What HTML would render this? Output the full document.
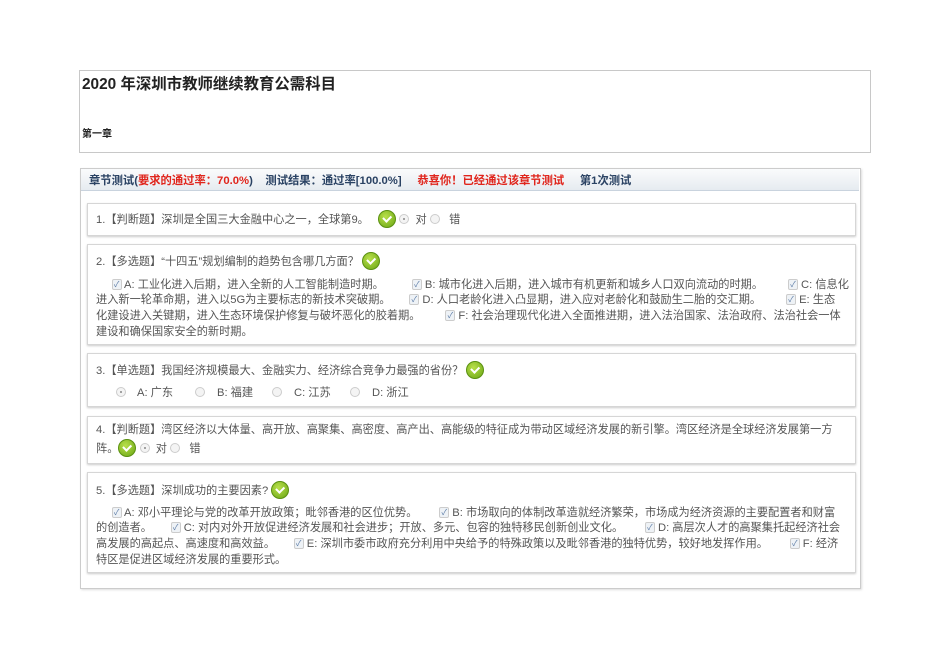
<!DOCTYPE html>
<html><head><meta charset="utf-8"><style>
body{margin:0;width:950px;height:672px;background:#fff;position:relative;font-family:"Liberation Sans","Noto Sans CJK SC",sans-serif;overflow:hidden}
.a{position:absolute;white-space:nowrap}
.t{font-size:11.2px;color:#555;line-height:14px}
.box{position:absolute;border:1px solid #d6d6d6;box-shadow:0 1px 2px #ccc;background:#fff}
.ok{display:inline-block;width:18px;height:18px;border-radius:50%;background:radial-gradient(circle at 40% 35%,#b8e04a,#6aa514);vertical-align:middle;position:relative;top:-1px;border:1px solid #5a9010;box-sizing:border-box}
.ok:after{content:"";position:absolute;left:4px;top:3.5px;width:6px;height:3.5px;border-left:2px solid #fff;border-bottom:2px solid #fff;transform:rotate(-45deg)}
.r{display:inline-block;width:10px;height:10px;border-radius:50%;border:1px solid #ccc;background:#f4f4f4;vertical-align:middle;box-sizing:border-box;position:relative;top:-1px}
.r.s:after{content:"";position:absolute;left:3px;top:3px;width:2px;height:2px;background:#888;border-radius:50%}
.c{display:inline-block;width:10px;height:11px;border:1px solid #ccc;border-radius:2px;background:#eef2f6;vertical-align:middle;box-sizing:border-box;position:relative;top:-1px;font-size:8px;line-height:9px;text-align:center;color:#5b7ba6}
</style></head><body>
<div style="position:absolute;left:79px;top:70px;width:790px;height:81px;border:1px solid #c8c8c8"></div>
<div class="a" style="left:82px;top:72px;font-size:15.4px;font-weight:bold;color:#222">2020 年深圳市教师继续教育公需科目</div>
<div class="a" style="left:82px;top:125px;font-size:10px;font-weight:bold;color:#222">第一章</div>

<div style="position:absolute;left:80px;top:168px;width:779px;height:419px;border:1px solid #ccc;box-shadow:1px 1px 2px #ddd"></div>
<div style="position:absolute;left:81px;top:169px;width:778px;height:21px;background:linear-gradient(#fafbfc,#e6ebf0);border-bottom:1px solid #c9d3de"></div>
<div class="a" style="left:89px;top:172px;font-size:11.3px;font-weight:bold;color:#2a4263">章节测试(<span style="color:#e0251c">要求的通过率：70.0%</span>)&nbsp;&nbsp;&nbsp;&nbsp;测试结果：通过率[100.0%]&nbsp;&nbsp;&nbsp;&nbsp;&nbsp;<span style="color:#e0251c">恭喜你！已经通过该章节测试</span>&nbsp;&nbsp;&nbsp;&nbsp;&nbsp;第1次测试</div>

<div class="box" style="left:87px;top:203px;width:767px;height:31px"></div>
<div class="a t" style="left:96px;top:211px">1.【判断题】深圳是全国三大金融中心之一，全球第9。&nbsp;&nbsp;&nbsp;<span class="ok"></span> <span class="r s"></span> &nbsp;对 <span class="r"></span> &nbsp; 错</div>

<div class="box" style="left:87px;top:244px;width:767px;height:99px"></div>
<div class="a t" style="left:96px;top:253px">2.【多选题】“十四五”规划编制的趋势包含哪几方面？ <span class="ok"></span></div>
<div class="a t" style="left:96px;top:278px">&nbsp;&nbsp;&nbsp;&nbsp;&nbsp;<span class="c">✓</span> A: 工业化进入后期，进入全新的人工智能制造时期。&nbsp;&nbsp;&nbsp;&nbsp;&nbsp;&nbsp;&nbsp;&nbsp;&nbsp;<span class="c">✓</span> B: 城市化进入后期，进入城市有机更新和城乡人口双向流动的时期。&nbsp;&nbsp;&nbsp;&nbsp;&nbsp;&nbsp;&nbsp;&nbsp;<span class="c">✓</span> C: 信息化</div>
<div class="a t" style="left:96px;top:293px">进入新一轮革命期，进入以5G为主要标志的新技术突破期。&nbsp;&nbsp;&nbsp;&nbsp;&nbsp;&nbsp;<span class="c">✓</span> D: 人口老龄化进入凸显期，进入应对老龄化和鼓励生二胎的交汇期。&nbsp;&nbsp;&nbsp;&nbsp;&nbsp;&nbsp;&nbsp;&nbsp;<span class="c">✓</span> E: 生态</div>
<div class="a t" style="left:96px;top:309px">化建设进入关键期，进入生态环境保护修复与破坏恶化的胶着期。&nbsp;&nbsp;&nbsp;&nbsp;&nbsp;&nbsp;&nbsp;&nbsp;<span class="c">✓</span> F: 社会治理现代化进入全面推进期，进入法治国家、法治政府、法治社会一体</div>
<div class="a t" style="left:96px;top:325px">建设和确保国家安全的新时期。</div>

<div class="box" style="left:87px;top:353px;width:767px;height:52px"></div>
<div class="a t" style="left:96px;top:362px">3.【单选题】我国经济规模最大、金融实力、经济综合竞争力最强的省份？ <span class="ok"></span></div>
<div class="a t" style="left:116px;top:386px"><span class="r s"></span></div>
<div class="a t" style="left:137px;top:386px">A: 广东</div>
<div class="a t" style="left:195px;top:386px"><span class="r"></span></div>
<div class="a t" style="left:217px;top:386px">B: 福建</div>
<div class="a t" style="left:272px;top:386px"><span class="r"></span></div>
<div class="a t" style="left:294px;top:386px">C: 江苏</div>
<div class="a t" style="left:350px;top:386px"><span class="r"></span></div>
<div class="a t" style="left:372px;top:386px">D: 浙江</div>

<div class="box" style="left:87px;top:416px;width:767px;height:46px"></div>
<div class="a t" style="left:96px;top:423px">4.【判断题】湾区经济以大体量、高开放、高聚集、高密度、高产出、高能级的特征成为带动区域经济发展的新引擎。湾区经济是全球经济发展第一方</div>
<div class="a t" style="left:96px;top:440px">阵。<span class="ok"></span> <span class="r s"></span> &nbsp;对 <span class="r"></span> &nbsp; 错</div>

<div class="box" style="left:87px;top:472px;width:767px;height:99px"></div>
<div class="a t" style="left:96px;top:482px">5.【多选题】深圳成功的主要因素? <span class="ok"></span></div>
<div class="a t" style="left:96px;top:506px">&nbsp;&nbsp;&nbsp;&nbsp;&nbsp;<span class="c">✓</span> A: 邓小平理论与党的改革开放政策；毗邻香港的区位优势。&nbsp;&nbsp;&nbsp;&nbsp;&nbsp;&nbsp;&nbsp;<span class="c">✓</span> B: 市场取向的体制改革造就经济繁荣，市场成为经济资源的主要配置者和财富</div>
<div class="a t" style="left:96px;top:521px">的创造者。&nbsp;&nbsp;&nbsp;&nbsp;&nbsp;&nbsp;<span class="c">✓</span> C: 对内对外开放促进经济发展和社会进步；开放、多元、包容的独特移民创新创业文化。&nbsp;&nbsp;&nbsp;&nbsp;&nbsp;&nbsp;&nbsp;<span class="c">✓</span> D: 高层次人才的高聚集托起经济社会</div>
<div class="a t" style="left:96px;top:537px">高发展的高起点、高速度和高效益。&nbsp;&nbsp;&nbsp;&nbsp;&nbsp;&nbsp;<span class="c">✓</span> E: 深圳市委市政府充分利用中央给予的特殊政策以及毗邻香港的独特优势，较好地发挥作用。&nbsp;&nbsp;&nbsp;&nbsp;&nbsp;&nbsp;&nbsp;<span class="c">✓</span> F: 经济</div>
<div class="a t" style="left:96px;top:553px">特区是促进区域经济发展的重要形式。</div>
</body></html>
